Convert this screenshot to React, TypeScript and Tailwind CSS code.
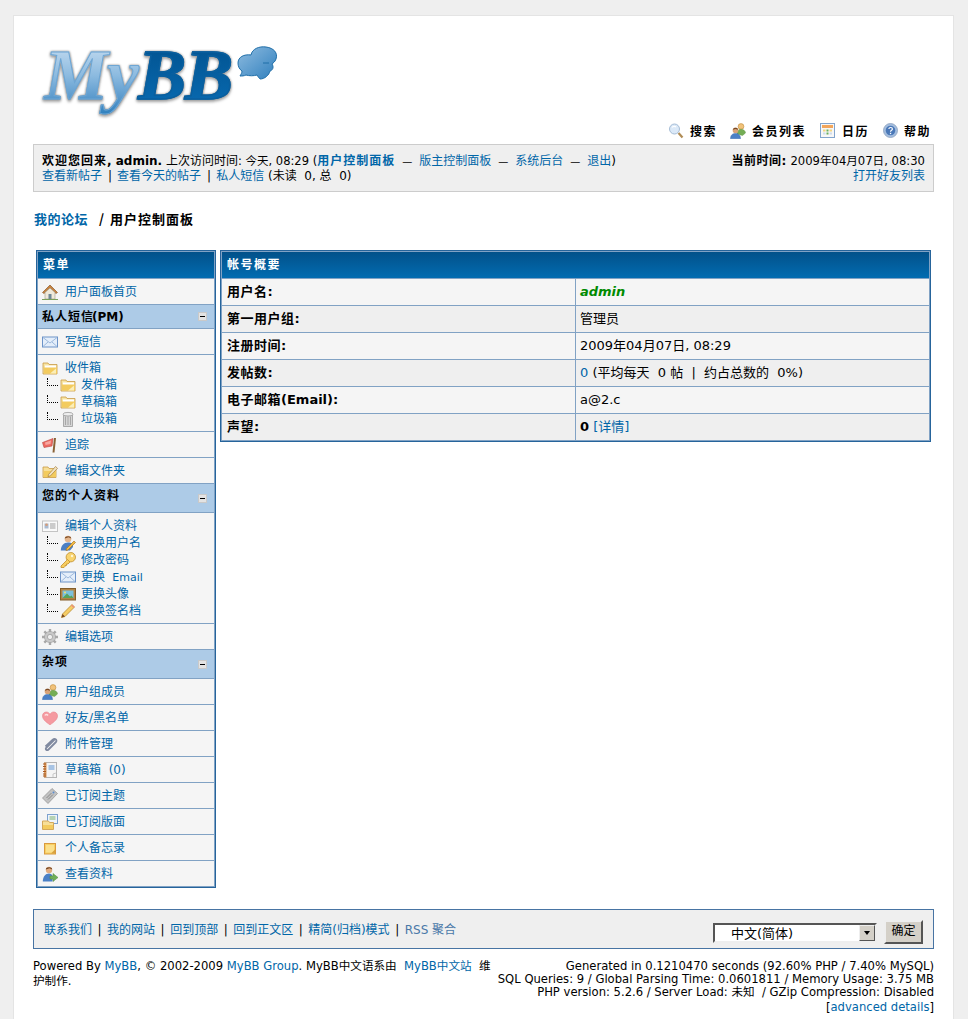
import type { ReactNode } from "react";

// 16px forum icons, hand drawn to follow the old MyBB set
const Svg = ({ children, w = 16, h = 16 }: { children: ReactNode; w?: number; h?: number }) => (
  <svg width={w} height={h} viewBox={`0 0 ${w} ${h}`} className="shrink-0">
    {children}
  </svg>
);

const House = () => (
  <Svg>
    <path d="M.5 8.500 8 1l7.500 7.500-1.500 1L8 4 2 9.500z" fill="#c9823e" stroke="#8a5c2c" strokeWidth=".7" />
    <path d="M3 8.500 8 4l5 4.500V15H3z" fill="#efe9da" stroke="#a09a88" strokeWidth=".6" />
    <rect x="6.500" y="10" width="3" height="5" fill="#6f8796" />
    <path d="M0 15.500h16" stroke="#7aa05a" strokeWidth="1" />
  </Svg>
);
const Mail = () => (
  <Svg>
    <rect x=".5" y="3" width="15" height="10" fill="#e4eefa" stroke="#6c93c8" />
    <path d="m1 3.500 7 5.500 7-5.500M1 12.500 6 8M15 12.500 10 8" fill="none" stroke="#9db9dc" />
  </Svg>
);
const Folder = () => (
  <Svg>
    <path d="M1 3h5l1 1.500h8V14H1z" fill="#f7e4a2" stroke="#c99a45" strokeWidth=".8" />
    <path d="M3 5.500h11V8H3z" fill="#fff" />
    <path d="M2 7.500h13v6H2z" fill="#f3cb5e" />
    <path d="M8 13.500 14 8.500v5z" fill="#fbeeb8" />
  </Svg>
);
const Trash = () => (
  <Svg>
    <path d="M3.500 4h9v11.500h-9z" fill="#d6d6d6" stroke="#8f8f8f" strokeWidth=".7" />
    <path d="M5.500 5.500v8.500M8 5.500v8.500M10.500 5.500v8.500" stroke="#a8a8a8" />
    <ellipse cx="8" cy="3.200" rx="5" ry="1.800" fill="#eee" stroke="#8f8f8f" strokeWidth=".7" />
  </Svg>
);
const Flag = () => (
  <Svg>
    <path d="M.5 5.500 11 1.500l-1 7.500-8 1.500z" fill="#ee6a62" stroke="#b94440" strokeWidth=".6" />
    <path d="M3 5.500 9 3.500 8.500 7 3.500 8z" fill="#f7a7a0" />
    <path d="M13 1 11.500 15.500" stroke="#8a6236" strokeWidth="2" />
  </Svg>
);
const FolderEdit = () => (
  <Svg>
    <path d="M1 4h5l1 1.500h7V14.500H1z" fill="#f7df98" stroke="#c99a45" strokeWidth=".8" />
    <path d="M2 8h12v6H2z" fill="#f3cb5e" />
    <path d="m6.500 11.500 7-8 2 1.800-7 7.500-2.500.8z" fill="#f1e2c0" stroke="#a8813c" strokeWidth=".7" />
  </Svg>
);
const Card = () => (
  <Svg>
    <rect x=".5" y="3" width="15" height="10.500" fill="#fafafa" stroke="#c4c4c4" />
    <rect x="2.500" y="5.500" width="4" height="5" fill="#a9bad0" />
    <circle cx="4.500" cy="6.800" r="1.300" fill="#d59c78" />
    <path d="M8 6h5.500M8 8h5.500M8 10h5.500" stroke="#9d9d9d" />
  </Svg>
);
const UserEdit = () => (
  <Svg>
    <circle cx="8" cy="4" r="3.300" fill="#e5b68c" />
    <path d="M4.800 3.500C4.800.6 11.200.2 11.200 3.500L8.500 2.200z" fill="#7a4a24" />
    <path d="M.8 15.500c0-5 3-8 7.200-8s5 1.500 5 4.500l-3 3.500z" fill="#4a7fc4" />
    <path d="m6.500 13.500 7.500-7.500 1.500 1.500L8 15l-2 .5z" fill="#f2b840" stroke="#9c6d1e" strokeWidth=".6" />
  </Svg>
);
const Key = () => (
  <Svg>
    <circle cx="10.800" cy="5.200" r="4.700" fill="#f8d36e" stroke="#c18f2c" strokeWidth=".8" />
    <circle cx="12" cy="4" r="1.200" fill="#fff6d2" />
    <path d="M7.500 7.500 1 14v1.500h3l1-1v-1h1.500V12H8l2-2z" fill="#f8cd5f" stroke="#c18f2c" strokeWidth=".8" />
  </Svg>
);
const Picture = () => (
  <Svg>
    <rect x=".5" y="2.500" width="15" height="11.500" fill="#b28445" stroke="#835d2a" />
    <rect x="2.500" y="4.500" width="11" height="7.500" fill="#7cc0dc" />
    <path d="M2.500 12 7 7.500l3 3 1.500-1 2 2.500z" fill="#58a35a" />
    <circle cx="5" cy="6.500" r="1" fill="#f6e26c" />
  </Svg>
);
const Pencil = () => (
  <Svg>
    <path d="m1.500 14.500 1-3.500 9.500-9.500 2.500 2.500L5 13.500z" fill="#f6cd66" stroke="#b78a2f" strokeWidth=".8" />
    <path d="m1.500 14.500 1-3.500 2.500 2.500z" fill="#7a4a24" />
    <path d="m11 2.500 2.500 2.500 1-1L12 1.500z" fill="#ee8f7c" />
  </Svg>
);
const Gear = () => (
  <Svg>
    <path d="M8 0v16M0 8h16M2.300 2.300l11.400 11.400M13.700 2.300 2.300 13.700" stroke="#a8a8a8" strokeWidth="2.400" />
    <circle cx="8" cy="8" r="5.600" fill="#c8c8c8" stroke="#9c9c9c" strokeWidth=".6" />
    <circle cx="8" cy="8" r="2.600" fill="#f0f0f0" stroke="#8c8c8c" strokeWidth=".6" />
  </Svg>
);
const Users = () => (
  <Svg>
    <circle cx="11" cy="3.500" r="2.900" fill="#f1c27a" stroke="#c08b3a" strokeWidth=".6" />
    <path d="M7 11c0-3 1.800-4.800 4-4.800s4.500 1.500 4.500 3.800l-3 2.500z" fill="#74ad55" stroke="#558a3c" strokeWidth=".4" />
    <circle cx="5.500" cy="7.500" r="2.800" fill="#d9a378" />
    <path d="M2.800 6.800c.5-2.600 5-2.600 5.400 0L5.500 6z" fill="#7a4a24" />
    <path d="M.5 15.800c0-3.800 2-5.300 5-5.300s5 1.500 5 5.300z" fill="#4a80c6" stroke="#2f63a8" strokeWidth=".4" />
  </Svg>
);
const Heart = () => (
  <Svg>
    <path d="M8 14.800C3 11.500.5 9 .5 5.800.5 3.500 2.300 2 4.300 2 6 2 7.300 3 8 4.300 8.700 3 10 2 11.700 2c2 0 3.800 1.500 3.800 3.800 0 3.200-2.500 5.700-7.500 9z" fill="#f59aa0" stroke="#e78088" strokeWidth=".6" />
    <path d="M3 5.500C3.500 4 5 4 6 5.500" stroke="#fde0e0" strokeWidth="1.500" fill="none" />
  </Svg>
);
const Clip = () => (
  <Svg>
    <path d="M12.500 3.500 4.500 11.500c-2 2 .5 3.500 2 2l7.500-7.500c1.500-1.500-1-4.500-3-2.500L3.500 10.500" fill="none" stroke="#808aa0" strokeWidth="1.800" />
  </Svg>
);
const Notebook = () => (
  <Svg>
    <rect x="2.500" y=".5" width="12" height="15" fill="#f4f4f4" stroke="#b4b4b4" />
    <rect x="2" y=".5" width="2.500" height="15" fill="#d99a5e" />
    <path d="M1 2h3M1 4.500h3M1 7h3M1 9.500h3M1 12h3M1 14h3" stroke="#a85a24" strokeWidth="1.100" />
    <rect x="6.500" y="3" width="6" height="5" fill="#a8c4e4" />
    <path d="M11 15v-3l3-1" fill="none" stroke="#c8c8c8" />
  </Svg>
);
const Ticket = () => (
  <Svg>
    <path d="M.5 10 10 .5l5.500 5-9.500 10z" fill="#c2c2c2" stroke="#8f8f8f" strokeWidth=".7" />
    <path d="m4.500 10 5-5M6 11.500l5-5" stroke="#8a8a8a" />
    <circle cx="11.500" cy="4.500" r="1" fill="#5b8ed0" />
  </Svg>
);
const FolderDocs = () => (
  <Svg>
    <rect x="5.500" y=".5" width="10" height="9" fill="#eef4fb" stroke="#7da2cf" />
    <path d="M7.500 3h6M7.500 5h6" stroke="#7cb06a" />
    <path d="M.5 7h6l1 1.500h4V15.500H.5z" fill="#f7df98" stroke="#d4a85a" />
    <path d="M1 11h10v4H1z" fill="#f3cb5e" />
  </Svg>
);
const Sticky = () => (
  <Svg>
    <rect x="2.500" y="3.500" width="11" height="10.500" fill="#f8cf62" stroke="#d99a3e" />
    <rect x="4" y="5" width="8" height="7.500" fill="#fbe08c" />
    <path d="M13 9.500 9 13.500h4z" fill="#d8a23e" />
  </Svg>
);
const UserGo = () => (
  <Svg>
    <circle cx="7" cy="4" r="3.200" fill="#e0ab80" />
    <path d="M3.800 3.500C3.800.5 10.200.2 10.200 3.500L7.500 2.300z" fill="#6f4420" />
    <path d="M.8 15.500c0-5 2.700-8 6.200-8 2 0 3 1 3.500 2.500v5.500z" fill="#4a80c6" />
    <path d="M8 10h3V7.500l5 4-5 4V13H8z" fill="#6fae5a" stroke="#4c8a3c" strokeWidth=".5" />
  </Svg>
);
const Search = () => (
  <Svg>
    <circle cx="6.500" cy="6" r="5" fill="#dbe9f8" stroke="#a6bdd6" />
    <path d="M4 4.500C5 3 7 3 8 4" fill="none" stroke="#fff" strokeWidth="1.200" />
    <path d="m10.500 10 4 4.500" stroke="#b08c55" strokeWidth="2.200" />
  </Svg>
);
const Calendar = () => (
  <Svg>
    <rect x=".5" y=".5" width="14" height="14" fill="#f7f7f7" stroke="#82a4cc" />
    <rect x="2" y="2" width="11" height="3" fill="#f2a65c" />
    <path d="M3 6.500h2.500v2H3zM9.500 6.500H12v2H9.500z" fill="#f3d680" />
    <path d="M6.500 6.500h2v2h-2zM6.500 9.500h2v2h-2z" fill="#69ae5c" />
    <path d="M3 9.500h2.500v2H3zM9.500 9.500H12v2H9.500z" fill="#cfdcea" />
  </Svg>
);
const Help = () => (
  <Svg>
    <circle cx="7.500" cy="7.500" r="7" fill="#a4bedf" stroke="#8c9fbc" strokeWidth=".8" />
    <circle cx="7.500" cy="7.500" r="4.800" fill="#4a78b8" />
    <path d="M5.800 6c.3-2 3.600-2 3.600 0 0 1.400-1.900 1.300-1.900 2.800" fill="none" stroke="#fff" strokeWidth="1.200" />
    <rect x="6.900" y="9.800" width="1.300" height="1.300" fill="#fff" />
  </Svg>
);

// dotted L joining a sub item to its parent
const TreeLine = () => (
  <span className="ml-[5px] mr-[2px] mb-[5px] h-[8px] w-[11px] shrink-0 border-b border-l border-dotted border-black" />
);

const Collapse = () => (
  <span className="flex h-[9px] w-[9px] items-center justify-center border border-[#c9c9c9] bg-[#e3e3e3]">
    <span className="h-px w-[5px] bg-black" />
  </span>
);

const LINK = "text-[#0066a8]";
const CN = "font-['Noto_Sans_CJK_SC',sans-serif]";
const BAR = "flex h-[26px] items-center bg-gradient-to-b from-[#02518a] to-[#026cb1] pb-[2px] pl-[5px] font-bold tracking-[1.5px] text-white";

type Item = { icon: ReactNode; label: ReactNode; subs?: { icon: ReactNode; label: ReactNode }[] };
type Block = { title?: ReactNode; tall?: boolean; items: Item[] };

const MENU: Block[] = [
  { items: [{ icon: <House />, label: "用户面板首页" }] },
  {
    title: (
      <>
        私人短信<span className="-ml-[2px] tracking-normal">(PM)</span>
      </>
    ),
    items: [
      { icon: <Mail />, label: "写短信" },
      {
        icon: <Folder />,
        label: "收件箱",
        subs: [
          { icon: <Folder />, label: "发件箱" },
          { icon: <Folder />, label: "草稿箱" },
          { icon: <Trash />, label: "垃圾箱" },
        ],
      },
      { icon: <Flag />, label: "追踪" },
      { icon: <FolderEdit />, label: "编辑文件夹" },
    ],
  },
  {
    title: "您的个人资料",
    tall: true,
    items: [
      {
        icon: <Card />,
        label: "编辑个人资料",
        subs: [
          { icon: <UserEdit />, label: "更换用户名" },
          { icon: <Key />, label: "修改密码" },
          { icon: <Mail />, label: <>更换 <span className="text-[11px]"> Email</span></> },
          { icon: <Picture />, label: "更换头像" },
          { icon: <Pencil />, label: "更换签名档" },
        ],
      },
      { icon: <Gear />, label: "编辑选项" },
    ],
  },
  {
    title: "杂项",
    tall: true,
    items: [
      { icon: <Users />, label: "用户组成员" },
      { icon: <Heart />, label: "好友/黑名单" },
      { icon: <Clip />, label: "附件管理" },
      { icon: <Notebook />, label: "草稿箱  (0)" },
      { icon: <Ticket />, label: "已订阅主题" },
      { icon: <FolderDocs />, label: "已订阅版面" },
      { icon: <Sticky />, label: "个人备忘录" },
      { icon: <UserGo />, label: "查看资料" },
    ],
  },
];

const ROWS: { name: ReactNode; value: ReactNode }[] = [
  {
    name: "用户名:",
    value: <b className="italic text-[#008a00]">admin</b>,
  },
  { name: "第一用户组:", value: "管理员" },
  { name: "注册时间:", value: "2009年04月07日, 08:29" },
  {
    name: "发帖数:",
    value: (
      <>
        <span className={LINK}>0</span> (平均每天&nbsp; 0 帖&nbsp; |&nbsp; 约占总数的&nbsp; 0%)
      </>
    ),
  },
  {
    name: (
      <>
        电子邮箱<span className="tracking-normal">(Email):</span>
      </>
    ),
    value: "a@2.c",
  },
  {
    name: "声望:",
    value: (
      <>
        <b>0</b> <span className={LINK}>[详情]</span>
      </>
    ),
  },
];

const Sep = () => <span className="mx-[5.500px]">|</span>;
const Pipe = () => <span className="ml-[6px] mr-[5px]">|</span>;
const Dash = () => <span className="mx-[7px] text-[10px]">—</span>;

function Logo() {
  return (
    <div className="flex h-[72px] items-start">
      <div className="-mt-[10px] flex font-['Liberation_Serif',serif] text-[72px] font-bold italic leading-[80px] tracking-[-1px] [filter:drop-shadow(0_0_1px_#8f8f8f)_drop-shadow(0_2px_1px_#b5b5b5)]">
        <span className="bg-gradient-to-b from-[#d4e5f4] via-[#8dbbe0] to-[#2c7fbd] bg-clip-text pr-[4px] text-transparent [-webkit-text-stroke:1px_#6ea6d4]">My</span>
        <span className="-ml-[4px] bg-gradient-to-b from-[#01508c] to-[#0a6db5] bg-clip-text pr-[6px] text-transparent [-webkit-text-stroke:1.5px_#0a5f9e]">BB</span>
      </div>
      <svg width="44" height="42" viewBox="0 0 44 42" className="-ml-[2px] -mt-[3px] shrink-0">
        <defs>
          <linearGradient id="bubble" x1="0" y1="0" x2="1" y2="1">
            <stop offset="0" stopColor="#8fbce0" />
            <stop offset="1" stopColor="#2f7fbd" />
          </linearGradient>
        </defs>
        <path
          d="M2 21c0-6 6-9 13-8 1-6 8-9 15-8 8 1 12 6 10 12-1 3-3 4-4 5 2 3 1 6-2 7-1 4-5 8-10 8 0 0-2-2-3-4-3 1-8 1-11 0-2 1-4 1-6 1 1-2 2-3 2-5-3-2-4-5-4-8z"
          fill="url(#bubble)"
          stroke="#1f6ea8"
          strokeWidth="1"
        />
        <path d="M27 21h6" stroke="#1f6ea8" strokeWidth="1" />
      </svg>
    </div>
  );
}

export default function App() {
  return (
    <div className="h-[1019px] overflow-hidden bg-[#efefef] pl-[13px] pr-[14px] pt-[15px] font-['DejaVu_Sans','Noto_Sans_CJK_SC',sans-serif] text-[12px] text-black">
      <div className="h-full border border-b-0 border-[#e4e4e4] bg-white pl-[19px] pr-[19px] pt-[29px]">
        <div className="pl-[11px]">
          <Logo />
        </div>

        {/* Top links */}
        <div className={`mt-[4px] flex h-[20px] items-center justify-end pr-[3px] text-[12px] font-bold tracking-[1.5px] ${CN}`}>
          <span className="flex items-center gap-[6px]"><Search />搜索</span>
          <span className="ml-[13px] flex items-center gap-[6px]"><Users />会员列表</span>
          <span className="ml-[14px] flex items-center gap-[6px]"><Calendar />日历</span>
          <span className="ml-[14px] flex items-center gap-[5px]"><Help />帮助</span>
        </div>

        {/* Welcome bar */}
        <div className="mt-[3px] flex h-[48px] justify-between border border-[#ccc] bg-[#efefef] pl-[8px] pr-[8px] pt-[9px] leading-[15px]">
          <div>
            <div className="whitespace-pre">
              <b className="tracking-[1px]">欢迎您回来</b>
              <b>, admin.</b> <span>上次访问时间</span>
              <span className="text-[11.5px]">: 今天, 08:29 (</span>
              <b className={`${LINK} tracking-[1px]`}>用户控制面板</b>
              <Dash />
              <span className={LINK}>版主控制面板</span>
              <Dash />
              <span className={LINK}>系统后台</span>
              <Dash />
              <span className={LINK}>退出</span>)
            </div>
            <div className="whitespace-pre">
              <span className={LINK}>查看新帖子</span>
              <Pipe />
              <span className={LINK}>查看今天的帖子</span>
              <Pipe />
              <span className={LINK}>私人短信</span> (未读&nbsp; 0, 总&nbsp; 0)
            </div>
          </div>
          <div className="text-right">
            <div className="text-[11.6px]">
              <b className="text-[12px] tracking-[.5px]">当前时间:</b> 2009年04月07日, 08:30
            </div>
            <div className={LINK}>打开好友列表</div>
          </div>
        </div>

        {/* Breadcrumb */}
        <div className={`mt-[19px] flex h-[16px] items-center pl-[1px] text-[13px] font-bold ${CN}`}>
          <span className={`${LINK} tracking-[.5px]`}>我的论坛</span>
          <span className="ml-[11px] mr-[6px]">/</span>
          <span className="tracking-[1px]">用户控制面板</span>
        </div>

        {/* Main */}
        <div className="ml-[3px] mr-[3px] mt-[23px] flex items-start gap-[4px]">
          <aside className="w-[180px] shrink-0 border border-[#26649b] bg-[#81a2c4] p-px">
            <div className={`${BAR} ${CN}`}>菜单</div>
            {MENU.map((block, i) => (
              <div key={i}>
                {block.title && (
                  <div
                    className={`flex justify-between border-t border-[#81a2c4] bg-[#adcbe7] pl-[4px] pr-[7px] font-bold ${
                      block.tall ? "h-[29px] pt-[3px]" : "h-[24px] items-center"
                    }`}
                  >
                    <span className="tracking-[1px]">{block.title}</span>
                    <span className={block.tall ? "pt-[7px]" : ""}>
                      <Collapse />
                    </span>
                  </div>
                )}
                {block.items.map((item, j) => (
                  <div
                    key={j}
                    className={`border-t border-[#81a2c4] bg-[#f5f5f5] pl-[4px] leading-[17px] ${LINK} ${
                      item.subs ? "pb-[4px] pt-[4px]" : "flex h-[26px] items-center"
                    }`}
                  >
                    <div className="flex h-[17px] items-center gap-[7px] whitespace-pre">
                      {item.icon}
                      <span className="translate-y-px">{item.label}</span>
                    </div>
                    {item.subs?.map((sub, k) => (
                      <div key={k} className="flex h-[17px] items-center whitespace-pre">
                        <TreeLine />
                        {sub.icon}
                        <span className="ml-[5px] translate-y-px">{sub.label}</span>
                      </div>
                    ))}
                  </div>
                ))}
              </div>
            ))}
          </aside>

          <main className="w-[711px] shrink-0 border border-[#26649b] bg-[#81a2c4] p-px">
            <div className={`${BAR} ${CN}`}>帐号概要</div>
            {ROWS.map((row, i) => (
              <div key={i} className={`flex h-[27px] items-stretch border-t border-[#81a2c4] text-[13px] ${i % 2 ? "bg-[#efefef]" : "bg-[#f5f5f5]"}`}>
                <div className="flex w-[354px] shrink-0 items-center border-r border-[#81a2c4] pl-[5px] font-bold tracking-[.5px]">
                  {row.name}
                </div>
                <div className="flex-1 self-center whitespace-pre pl-[4px]">{row.value}</div>
              </div>
            ))}
          </main>
        </div>

        {/* Footer bar */}
        <div className="mt-[21px] flex h-[40px] items-end justify-between border border-[#4874a3] bg-[#efefef] pl-[10px] pr-[10px]">
          <div className="flex h-full items-center whitespace-pre pt-[1px]">
            <span className={LINK}>联系我们</span>
            <Sep />
            <span className={LINK}>我的网站</span>
            <Sep />
            <span className={LINK}>回到顶部</span>
            <Sep />
            <span className={LINK}>回到正文区</span>
            <Sep />
            <span className={LINK}>精简(归档)模式</span>
            <Sep />
            <span className="text-[#4a78a8]">RSS 聚合</span>
          </div>
          <div className="flex items-end gap-[7px] pb-[4px]">
            <div className="mb-px flex h-[20px] w-[164px] items-center justify-between border-2 border-b-[#eee] border-l-[#555] border-r-[#eee] border-t-[#555] bg-white pl-[16px] text-[13px]">
              <span className="translate-y-px">中文(简体)</span>
              <span className="flex h-[16px] w-[16px] items-center justify-center border border-b-[#555] border-l-[#eee] border-r-[#555] border-t-[#eee] bg-[#d4d0c8]">
                <span className="h-0 w-0 border-x-[3.500px] border-t-[4px] border-x-transparent border-t-black" />
              </span>
            </div>
            <button className="h-[24px] w-[39px] border-2 border-b-[#555] border-l-[#eee] border-r-[#555] border-t-[#eee] bg-[#d4d0c8] pb-[2px] text-[12px] text-black">
              确定
            </button>
          </div>
        </div>

        {/* Debug and copyright */}
        <div className="mt-[11px] flex justify-between text-[11.6px]">
          <div className="-mt-px w-[458px] leading-[15px]">
            Powered By <span className={LINK}>MyBB</span>, © 2002-2009 <span className={LINK}>MyBB Group</span>. MyBB中文语系由&nbsp; <span className={LINK}>MyBB中文站</span>&nbsp; 维护制作.
          </div>
          <div className="whitespace-pre text-right leading-[13px]">
            <div>Generated in 0.1210470 seconds (92.60% PHP / 7.40% MySQL)</div>
            <div>SQL Queries: 9 / Global Parsing Time: 0.0601811 / Memory Usage: 3.75 MB</div>
            <div>PHP version: 5.2.6 / Server Load: 未知&nbsp; / GZip Compression: Disabled</div>
            <div className="mt-[2px]">
              [<span className={LINK}>advanced details</span>]
            </div>
          </div>
        </div>
      </div>
    </div>
  );
}
